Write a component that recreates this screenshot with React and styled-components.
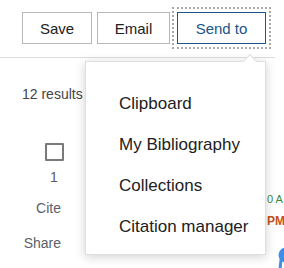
import React from 'react';
import styled, { createGlobalStyle } from 'styled-components';

const GlobalStyle = createGlobalStyle`
	html, body {
		margin: 0;
		padding: 0;
		background: #FFFFFF;
	}
	body {
		font-family: "Liberation Sans", Arial, sans-serif;
		color: #212121;
	}
`;

const menuItems = ['Clipboard', 'My Bibliography', 'Collections', 'Citation manager'];

const App = () => {
	return (
		<Page>
			<GlobalStyle />
			<Toolbar>
				<ActionButton>Save</ActionButton>
				<ActionButton>Email</ActionButton>
				<ActionButton primary focused>Send to</ActionButton>
			</Toolbar>
			<Divider />
			<Results>
				<ResultCount>12 results</ResultCount>
				<Article>
					<SideColumn>
						<CheckBlock>
							<Checkbox />
							<ArticleNumber>1</ArticleNumber>
						</CheckBlock>
						<SideLink top={15}>Cite</SideLink>
						<SideLink top={19}>Share</SideLink>
					</SideColumn>
					<ArticleBody>
						<Citation>0 A</Citation>
						<Identifier>PM</Identifier>
						<Bubble width="20" height="24" viewBox="0 0 20 24">
							<circle cx="10" cy="8" r="7.5" fill="#3b8fe8" />
							<path d="M5 13 L4 22" stroke="#3b8fe8" strokeWidth="3" strokeLinecap="round" />
						</Bubble>
					</ArticleBody>
				</Article>
			</Results>
			<Dropdown>
				{menuItems.map((item) => (
					<MenuItem key={item}>{item}</MenuItem>
				))}
			</Dropdown>
		</Page>
	);
};

export default App;

const Page = styled.div`
	position: relative;
	width: 284px;
	height: 268px;
	overflow: hidden;
	background: #FFFFFF;
`;

const Toolbar = styled.div`
	display: flex;
	align-items: center;
	padding: 12px 0 0 22px;
`;

const ActionButton = styled.button`
	box-sizing: border-box;
	height: 32px;
	padding: 0;
	margin-right: ${props => props.primary ? '0' : '6px'};
	width: ${props => props.primary ? '89px' : props.children === 'Save' ? '70px' : '73px'};
	background: #FFFFFF;
	border: 1px solid ${props => props.primary ? '#20558a' : '#b8b8b8'};
	color: ${props => props.primary ? '#20558a' : '#212121'};
	font-family: "Liberation Sans", Arial, sans-serif;
	font-size: 15px;
	outline: ${props => props.focused ? '2px dotted #a8a8a8' : 'none'};
	outline-offset: 3px;
	&:first-child {
		margin-right: 5px;
	}
	&:nth-child(2) {
		margin-right: 7px;
	}
`;

const Divider = styled.div`
	width: 275px;
	height: 1px;
	margin-top: 13px;
	background: #dcdcdc;
`;

const Results = styled.div`
	padding-left: 22px;
`;

const ResultCount = styled.div`
	margin-top: 28px;
	font-size: 14px;
	line-height: 16px;
	color: #444444;
	white-space: nowrap;
`;

const Article = styled.div`
	display: flex;
	margin-top: 41px;
`;

const SideColumn = styled.div`
	display: flex;
	flex-direction: column;
	align-items: flex-end;
	width: 39px;
	flex-shrink: 0;
	font-size: 14px;
	line-height: 16px;
	color: #5b616b;
`;

const CheckBlock = styled.div`
	display: flex;
	flex-direction: column;
	align-items: center;
	width: 20px;
	margin-right: -3px;
`;

const Checkbox = styled.div`
	box-sizing: border-box;
	width: 19px;
	height: 18px;
	border: 2px solid #7a7a7a;
	border-radius: 1px;
`;

const ArticleNumber = styled.div`
	margin-top: 8px;
	color: #5b5b5b;
`;

const SideLink = styled.div`
	margin-top: ${props => props.top}px;
`;

const ArticleBody = styled.div`
	display: flex;
	flex-direction: column;
	padding-left: 206px;
	white-space: nowrap;
`;

const Citation = styled.div`
	margin-top: 50px;
	font-size: 11px;
	line-height: 13px;
	color: #3d8b3d;
`;

const Identifier = styled.div`
	margin-top: 8px;
	font-size: 12px;
	line-height: 14px;
	font-weight: bold;
	color: #c4531a;
`;

const Bubble = styled.svg`
	display: block;
	margin-top: 19px;
	margin-left: 9px;
`;

const Dropdown = styled.div`
	position: absolute;
	left: 85px;
	top: 61px;
	box-sizing: border-box;
	width: 181px;
	height: 194px;
	padding: 21px 0 7px 33px;
	background: #FFFFFF;
	border: 1px solid #dedede;
	box-shadow: 0 2px 10px rgba(0, 0, 0, 0.18);
	&::before {
		content: '';
		position: absolute;
		top: -6px;
		left: 159px;
		width: 9px;
		height: 9px;
		background: #FFFFFF;
		border-top: 1px solid #dedede;
		border-left: 1px solid #dedede;
		transform: rotate(45deg);
	}
`;

const MenuItem = styled.div`
	font-size: 17px;
	line-height: 41px;
	color: #212121;
	white-space: nowrap;
`;
